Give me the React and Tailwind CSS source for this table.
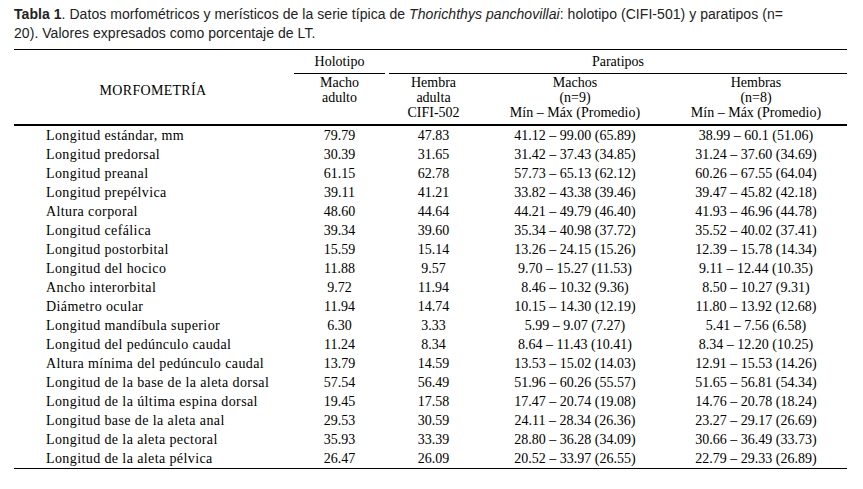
import React from "react";

const rows = [
  ["Longitud estándar, mm", "79.79", "47.83", "41.12 – 99.00 (65.89)", "38.99 – 60.1 (51.06)"],
  ["Longitud predorsal", "30.39", "31.65", "31.42 – 37.43 (34.85)", "31.24 – 37.60 (34.69)"],
  ["Longitud preanal", "61.15", "62.78", "57.73 – 65.13 (62.12)", "60.26 – 67.55 (64.04)"],
  ["Longitud prepélvica", "39.11", "41.21", "33.82 – 43.38 (39.46)", "39.47 – 45.82 (42.18)"],
  ["Altura corporal", "48.60", "44.64", "44.21 – 49.79 (46.40)", "41.93 – 46.96 (44.78)"],
  ["Longitud cefálica", "39.34", "39.60", "35.34 – 40.98 (37.72)", "35.52 – 40.02 (37.41)"],
  ["Longitud postorbital", "15.59", "15.14", "13.26 – 24.15 (15.26)", "12.39 – 15.78 (14.34)"],
  ["Longitud del hocico", "11.88", "9.57", "9.70 – 15.27 (11.53)", "9.11 – 12.44 (10.35)"],
  ["Ancho interorbital", "9.72", "11.94", "8.46 – 10.32 (9.36)", "8.50 – 10.27 (9.31)"],
  ["Diámetro ocular", "11.94", "14.74", "10.15 – 14.30 (12.19)", "11.80 – 13.92 (12.68)"],
  ["Longitud mandíbula superior", "6.30", "3.33", "5.99 – 9.07 (7.27)", "5.41 – 7.56 (6.58)"],
  ["Longitud del pedúnculo caudal", "11.24", "8.34", "8.64 – 11.43 (10.41)", "8.34 – 12.20 (10.25)"],
  ["Altura mínima del pedúnculo caudal", "13.79", "14.59", "13.53 – 15.02 (14.03)", "12.91 – 15.53 (14.26)"],
  ["Longitud de la base de la aleta dorsal", "57.54", "56.49", "51.96 – 60.26 (55.57)", "51.65 – 56.81 (54.34)"],
  ["Longitud de la última espina dorsal", "19.45", "17.58", "17.47 – 20.74 (19.08)", "14.76 – 20.78 (18.24)"],
  ["Longitud base de la aleta anal", "29.53", "30.59", "24.11 – 28.34 (26.36)", "23.27 – 29.17 (26.69)"],
  ["Longitud de la aleta pectoral", "35.93", "33.39", "28.80 – 36.28 (34.09)", "30.66 – 36.49 (33.73)"],
  ["Longitud de la aleta pélvica", "26.47", "26.09", "20.52 – 33.97 (26.55)", "22.79 – 29.33 (26.89)"],
];

export default function App() {
  return (
    <div className="w-[863px] h-[489px] bg-white overflow-hidden">
      <div className="pl-[14px] pt-[5px] text-[14px] leading-[18.5px] text-[#222] [font-family:'Liberation_Sans',Arial,sans-serif] whitespace-nowrap tracking-[0.05px]">
        <span className="font-bold">Tabla 1</span>. Datos morfométricos y merísticos de la serie típica de{" "}
        <i>Thorichthys panchovillai</i>: holotipo (CIFI-501) y paratipos (n=
        <br />
        20). Valores expresados como porcentaje de LT.
      </div>

      <div className="ml-[14px] mt-[7px] w-[833px] [font-family:'Liberation_Serif','Times_New_Roman',serif] text-[14px] text-black">
        <div className="h-px bg-black" />
        <div className="grid grid-cols-[278px_95px_93px_190px_177px]">
          <div className="row-span-2 text-center pt-[31px] leading-[19px] tracking-[0.3px]">MORFOMETRÍA</div>
          <div className="leading-[23px] text-center mx-[2px] border-b border-black">Holotipo</div>
          <div className="col-span-3 leading-[23px] text-center ml-[2px] border-b border-black">Paratipos</div>
          <div className="text-center leading-[15px] pt-[1px] pb-[4px]">
            Macho
            <br />
            adulto
          </div>
          <div className="text-center leading-[15px] pt-[1px] pb-[4px]">
            Hembra
            <br />
            adulta
            <br />
            CIFI-502
          </div>
          <div className="text-center leading-[15px] pt-[1px] pb-[4px]">
            Machos
            <br />
            (n=9)
            <br />
            Mín – Máx (Promedio)
          </div>
          <div className="text-center leading-[15px] pt-[1px] pb-[4px] pr-[5px]">
            Hembras
            <br />
            (n=8)
            <br />
            Mín – Máx (Promedio)
          </div>
        </div>
        <div className="h-[1.5px] bg-black" />
        <div className="grid grid-cols-[278px_95px_93px_190px_177px] leading-[19px] pt-[0.5px]">
          {rows.map((r, i) => (
            <React.Fragment key={i}>
              <div className="pl-[32px] tracking-[0.4px] whitespace-nowrap">{r[0]}</div>
              <div className="text-center">{r[1]}</div>
              <div className="text-center">{r[2]}</div>
              <div className="text-center">{r[3]}</div>
              <div className="text-center pr-[5px]">{r[4]}</div>
            </React.Fragment>
          ))}
        </div>
        <div className="h-px bg-black" />
      </div>
    </div>
  );
}
